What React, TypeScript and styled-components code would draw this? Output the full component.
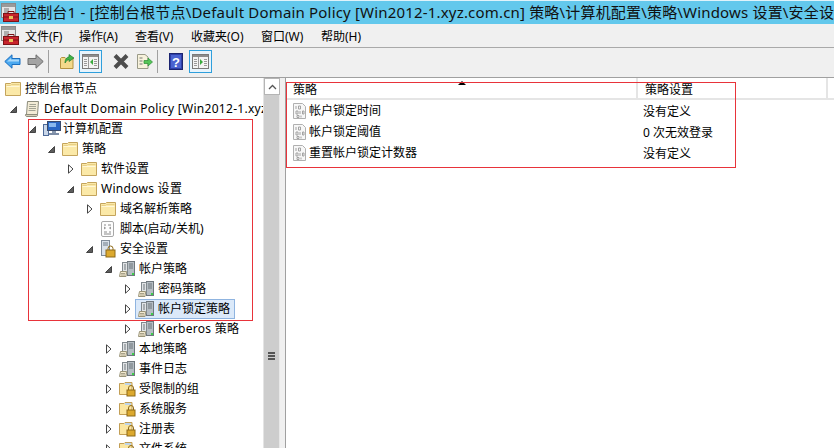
import React from "react";
import styled, { createGlobalStyle } from "styled-components";

const Global = createGlobalStyle`
  html, body { margin: 0; padding: 0; background: #fff; }
  body { font-family: "Noto Sans", "Noto Sans CJK SC", sans-serif; font-size: 12px; color: #000; }
  #root { width: 834px; height: 448px; overflow: hidden; }
  svg { flex: none; display: block; }
`;

const Shell = styled.div`
  position: relative;
  width: 834px;
  height: 448px;
  display: flex;
  flex-direction: column;
  overflow: hidden;
`;
const TitleBar = styled.div`
  height: 24px;
  flex: none;
  box-sizing: border-box;
  border-top: 1px solid #dff3fb;
  background: #63c8ec;
  display: flex;
  align-items: center;
  padding-left: 1px;
  gap: 3px;
  white-space: nowrap;
  overflow: hidden;
`;
const TitleText = styled.span`
  font-size: 15px;
  line-height: 23px;
  letter-spacing: 0.18px;
  color: #111;
`;
const MenuBar = styled.div`
  height: 24px;
  flex: none;
  box-sizing: border-box;
  background: #f0f0f0;
  border-bottom: 1px solid #a9a9a9;
  display: flex;
  align-items: center;
  padding-left: 1px;
`;
const MenuIcon = styled.div`
  width: 24px;
  height: 20px;
  flex: none;
`;
const MenuItem = styled.span<{ $w: number }>`
  width: ${(p) => p.$w}px;
  flex: none;
  font-size: 12px;
`;
const ToolBar = styled.div`
  height: 30px;
  flex: none;
  box-sizing: border-box;
  background: #f0f0f0;
  border-bottom: 1px solid #a0a0a0;
  display: flex;
  align-items: center;
  padding: 0 0 3px 4px;
`;
const ToolIcon = styled.div<{ $l?: number }>`
  flex: none;
  margin-left: ${(p) => p.$l ?? 0}px;
  display: flex;
`;
const ToolSep = styled.div<{ $l: number }>`
  width: 1px;
  height: 23px;
  background: #a0a0a0;
  margin-left: ${(p) => p.$l}px;
  flex: none;
`;
const ToggleButton = styled.div<{ $l: number }>`
  width: 23px;
  height: 23px;
  box-sizing: border-box;
  flex: none;
  margin-left: ${(p) => p.$l}px;
  border: 1px solid #2f9fdc;
  background: #e8f4fc;
  display: flex;
  align-items: center;
  justify-content: center;
`;
const Panes = styled.div`
  flex: 1;
  min-height: 0;
  display: flex;
  background: #f0f0f0;
  overflow: hidden;
`;
const TreePane = styled.div`
  width: 280px;
  flex: none;
  display: flex;
  background: #fff;
  overflow: hidden;
`;
const TreeList = styled.div`
  flex: 1;
  min-width: 0;
  overflow: hidden;
  padding-top: 1px;
`;
const Row = styled.div`
  height: 20px;
  display: flex;
  align-items: center;
  white-space: nowrap;
`;
const Indent = styled.div<{ $level: number }>`
  width: ${(p) => 3 + p.$level * 19}px;
  flex: none;
  display: flex;
  justify-content: flex-end;
  align-items: center;
`;
const ArrowBox = styled.div`
  margin-right: 5px;
  width: 7px;
  display: flex;
  justify-content: center;
  flex: none;
`;
const Item = styled.div<{ $sel?: boolean }>`
  display: flex;
  align-items: center;
  gap: 4px;
  height: 20px;
  box-sizing: border-box;
  padding: 0 4px 0 2px;
  border: 1px solid transparent;
  margin-left: -1px;
  background: ${(p) => (p.$sel ? "#dbe9f9" : "transparent")};
  border-color: ${(p) => (p.$sel ? "#8fb4e0" : "transparent")};
`;
const IconSlot = styled.div`
  width: 16px;
  height: 18px;
  flex: none;
  display: flex;
  align-items: center;
`;
const Label = styled.span<{ $wide?: boolean }>`
  font-size: 12px;
  line-height: 18px;
  letter-spacing: ${(p) => (p.$wide ? "0.28px" : "0")};
`;
const ScrollBar = styled.div`
  width: 17px;
  height: 540px;
  flex: none;
  display: flex;
  flex-direction: column;
  background: #f0f0f0;
  border-left: 1px solid #e4e4e4;
  box-sizing: border-box;
`;
const ScrollBtn = styled.div`
  height: 17px;
  flex: none;
  background: #fff;
  border: 1px solid #b5b5b5;
  box-sizing: border-box;
  display: flex;
  align-items: center;
  justify-content: center;
`;
const ScrollThumb = styled.div`
  flex: 1;
  background: #cdcdcd;
  display: flex;
  align-items: center;
  justify-content: center;
  border-right: 1px solid #e8e8e8;
  padding-bottom: 2px;
`;
const Grip = styled.div`
  width: 7px;
  height: 8px;
  border-top: 2px solid #555;
  border-bottom: 2px solid #555;
  box-sizing: border-box;
  &::after {
    content: "";
    display: block;
    height: 2px;
    margin-top: 1px;
    background: #555;
  }
`;
const Splitter = styled.div`
  width: 5px;
  flex: none;
`;
const ListPane = styled.div`
  flex: 1;
  min-width: 0;
  background: #fff;
  border-left: 1px solid #a0a0a0;
  display: flex;
  flex-direction: column;
`;
const HeaderRow = styled.div`
  height: 22px;
  flex: none;
  display: flex;
  border-bottom: 2px solid #e5e5e5;
  box-sizing: border-box;
`;
const HeaderCell = styled.div<{ $w: number }>`
  width: ${(p) => p.$w}px;
  flex: none;
  box-sizing: border-box;
  border-right: 2px solid #e5e5e5;
  padding: 3px 0 0 7px;
  font-size: 12px;
  line-height: 18px;
  position: relative;
`;
const SortMark = styled.div`
  position: absolute;
  left: 172px;
  top: 3px;
  width: 0;
  height: 0;
  border-left: 4px solid transparent;
  border-right: 4px solid transparent;
  border-bottom: 4px solid #000;
`;
const ListRow = styled.div`
  height: 21px;
  display: flex;
  align-items: center;
  white-space: nowrap;
`;
const NameCell = styled.div`
  width: 350px;
  flex: none;
  display: flex;
  align-items: center;
  gap: 3px;
  padding-left: 7px;
  box-sizing: border-box;
`;
const ValueCell = styled.div`
  font-size: 12px;
  padding-left: 7px;
`;
const Highlight = styled.div<{ $x: number; $y: number; $w: number; $h: number }>`
  position: absolute;
  left: ${(p) => p.$x}px;
  top: ${(p) => p.$y}px;
  width: ${(p) => p.$w}px;
  height: ${(p) => p.$h}px;
  box-sizing: border-box;
  border: 1px solid #e8333a;
  pointer-events: none;
`;

const AppIcon = () => (
  <svg width="18" height="20" viewBox="0 0 18 20">
    <rect x=".5" y=".5" width="14" height="14" fill="#e6e6e6" stroke="#8a8a8a" />
    <rect x="1" y="1" width="13" height="3" fill="#9a9a9a" />
    <path d="M3 6h5M3 8h5M3 10h5" stroke="#777" />
    <rect x="2.500" y="10.500" width="15" height="8" fill="#c8242c" stroke="#7c1216" />
    <path d="M7 10.500V8.500h6v2" fill="none" stroke="#7c1216" />
    <path d="M3 14h14" stroke="#7c1216" />
    <rect x="8" y="13" width="4" height="3" fill="#e8c35a" />
  </svg>
);
const Folder = () => (
  <svg width="16" height="16" viewBox="0 0 16 16">
    <path d="M.5 2.500V14.500H15.500V1.500H6.500L5.500 2.500Z" fill="#fbe9a8" stroke="#c4a45c" />
    <path d="M1.500 4.500H5.500L6.500 3.500H14.500" fill="none" stroke="#e7cf86" />
    <path d="M1.500 5.500H14.500" stroke="#fff7d8" />
  </svg>
);
const LockFolder = () => (
  <svg width="18" height="16" viewBox="0 0 18 16">
    <path d="M.5 2.500V13.500H13V1.500H6L5 2.500Z" fill="#fbe6a0" stroke="#c29e55" />
    <rect x="6" y="2" width="6" height="2" fill="#bcd4ea" />
    <rect x="8" y="9" width="8" height="6" fill="#dca92e" stroke="#8e6a18" />
    <path d="M9.500 9V7a2.500 2.500 0 0 1 5 0v2" fill="none" stroke="#8e6a18" />
  </svg>
);
const PolicyDoc = () => (
  <svg width="16" height="18" viewBox="0 0 16 18">
    <path d="M3.500 1.500H14.500L13.500 14.500H2.500Z" fill="#f3ecd6" stroke="#8c8c7c" />
    <path d="M5.500 4.500H12M5 6.500H12M5 8.500H12M4.500 10.500H11.500" stroke="#a3a394" />
    <path d="M1.500 14.500a1.500 1.500 0 0 0 1.500 2H12a1.500 1.500 0 0 0 1.500-2Z" fill="#d7d0b8" stroke="#8c8c7c" />
  </svg>
);
const Computer = () => (
  <svg width="18" height="18" viewBox="0 0 18 18">
    <rect x=".5" y="4.500" width="5" height="11" fill="#c9d6e8" stroke="#4e6a99" />
    <rect x="4.500" y="1.500" width="13" height="9" fill="#2a67c4" stroke="#3a4a6a" />
    <rect x="6" y="3" width="7" height="4" fill="#8ab9ee" />
    <path d="M9 11v2H13V11" fill="#8a9ab0" />
    <rect x="6" y="13" width="10" height="2" fill="#7d8da6" />
  </svg>
);
const Script = () => (
  <svg width="16" height="16" viewBox="0 0 16 16">
    <rect x="1.500" y=".5" width="12" height="15" rx="1.500" fill="#fdfdfd" stroke="#a8a8a8" />
    <path d="M4 4h2M8 4h3M4 8l1.500-1L4 6M11 6l-1.500 1 1.500 1M4 11h3M9 11h2M4 13h7" fill="none" stroke="#8a8a8a" />
  </svg>
);
const SafeIcon = () => (
  <svg width="16" height="18" viewBox="0 0 16 18">
    <rect x="1.500" y=".5" width="8" height="15" fill="#d9e1ea" stroke="#7f8b99" />
    <path d="M3 3h5M3 5h5" stroke="#6d7a88" />
    <rect x="6" y="10" width="9" height="7" fill="#dca92e" stroke="#8e6a18" />
    <path d="M8 10V8.500a2.500 2.500 0 0 1 5 0V10" fill="none" stroke="#8e6a18" />
  </svg>
);
const ServerDoc = () => (
  <svg width="16" height="18" viewBox="0 0 16 18">
    <rect x="8.500" y="1.500" width="7" height="14" fill="#b5bdc3" stroke="#6f777d" />
    <rect x="3.500" y="2.500" width="5" height="11" fill="#e1e4e6" stroke="#81898e" />
    <path d="M10 4h4M10 6h4M10 8h4M5 5h2M5 7h2M5 9h2" stroke="#6f777d" />
    <rect x="13" y="13" width="2" height="2" fill="#3ccf4a" />
    <path d="M1.500 11.500h6L7 16.500H.5Z" fill="#f3ead0" stroke="#9a9478" />
    <path d="M2 13.500h4M2 15h4" stroke="#a8a28a" />
  </svg>
);
const PolicyItem = () => (
  <svg width="13" height="16" viewBox="0 0 13 16">
    <path d="M.5 .5H9.500L12.500 3.500V15.500H.5Z" fill="#f7f7f7" stroke="#b0b0b0" />
    <path d="M3 3v3M5.500 3h2v3h-2ZM3 8h2v3H3ZM7 8v3M9.500 8h1.500v3H9.500ZM4 12.500h2v2H4ZM8 12.500v2" fill="none" stroke="#a2a2a2" />
  </svg>
);

const OpenArrow = () => (
  <svg width="7" height="7" viewBox="0 0 7 7"><path d="M6.500 .5V6.500H.5Z" fill="#5c5c5c" stroke="#444" /></svg>
);
const ClosedArrow = () => (
  <svg width="7" height="10" viewBox="0 0 7 10"><path d="M1.500 .8L6 5 1.500 9.200Z" fill="#fff" stroke="#444" /></svg>
);

const BackIcon = () => (
  <svg width="17" height="15" viewBox="0 0 17 15">
    <path d="M8 .8L.8 7.500 8 14.200V10.500H16V4.500H8Z" fill="#4aa8f0" stroke="#1a6fc0" />
    <path d="M7 4L3 7.500H15V5.500H7Z" fill="#a8d8fa" />
  </svg>
);
const ForwardIcon = () => (
  <svg width="17" height="15" viewBox="0 0 17 15">
    <path d="M9 .8L16.200 7.500 9 14.200V10.500H1V4.500H9Z" fill="#a4a4a4" stroke="#6d6d6d" />
  </svg>
);
const UpIcon = () => (
  <svg width="15" height="16" viewBox="0 0 15 16">
    <path d="M.5 5.500V15.500H13V5.500H6L5 4.500H1.500Z" fill="#f3d98a" stroke="#b4923f" />
    <path d="M5 10c0-4 2-6 4-6V1.500L14 5 9 8.500V6.500C7.500 6.500 6.500 8 5 10Z" fill="#3fb548" stroke="#237a2c" strokeWidth=".7" />
  </svg>
);
const PaneIcon = ({ side }: { side: "l" | "r" }) => (
  <svg width="17" height="15" viewBox="0 0 17 15">
    <rect x=".5" y=".5" width="16" height="14" fill="#f4f4f4" stroke="#7a7a7a" />
    <rect x="1" y="1" width="15" height="2" fill="#8c8c8c" />
    <path d="M6.500 3v11" stroke="#9a9a9a" />
    <path d="M2 5.500h3M2 7.500h3M2 9.500h3M2 11.500h3M12 5.500h3M12 7.500h3M12 9.500h3M12 11.500h3" stroke="#9a9a9a" />
    {side === "r" ? (
      <path d="M8 5L11 8 8 11Z" fill="#38a93f" />
    ) : (
      <path d="M11 5L8 8 11 11Z" fill="#38a93f" />
    )}
  </svg>
);
const DeleteIcon = () => (
  <svg width="16" height="15" viewBox="0 0 16 15">
    <path d="M2 1.500L14 13.500M14 1.500L2 13.500" stroke="#4d4d4d" strokeWidth="4" />
  </svg>
);
const ExportIcon = () => (
  <svg width="17" height="17" viewBox="0 0 17 17">
    <path d="M1.500 1.500H9L12 4V15.500H1.500Z" fill="#f7f2dc" stroke="#9a9a88" />
    <path d="M3.500 5h3M3.500 8h3M3.500 11h3" stroke="#777" />
    <path d="M8 7.500h4V5l4.500 4-4.500 4V10.500H8Z" fill="#55c558" stroke="#2c8c33" strokeWidth=".7" />
  </svg>
);
const HelpIcon = () => (
  <svg width="15" height="17" viewBox="0 0 15 17">
    <rect x=".5" y=".5" width="13" height="16" fill="#2e3fa8" stroke="#1b2470" />
    <rect x="2" y="2" width="10" height="13" fill="#4a63d0" />
    <text x="7" y="14" textAnchor="middle" fontSize="13" fontWeight="700" fontFamily="Liberation Sans" fill="#fff">?</text>
  </svg>
);

type Icon = "folder" | "lock" | "doc" | "pc" | "script" | "safe" | "server";
const icons: Record<Icon, React.ReactElement> = {
  folder: <Folder />,
  lock: <LockFolder />,
  doc: <PolicyDoc />,
  pc: <Computer />,
  script: <Script />,
  safe: <SafeIcon />,
  server: <ServerDoc />,
};
type Node = { l: number; a?: "o" | "c"; i: Icon; t: string; s?: boolean; w?: boolean };
const tree: Node[] = [
  { l: 0, i: "folder", t: "控制台根节点" },
  { l: 1, a: "o", i: "doc", t: "Default Domain Policy [Win2012-1.xyz.", w: true },
  { l: 2, a: "o", i: "pc", t: "计算机配置" },
  { l: 3, a: "o", i: "folder", t: "策略" },
  { l: 4, a: "c", i: "folder", t: "软件设置" },
  { l: 4, a: "o", i: "folder", t: "Windows 设置", w: true },
  { l: 5, a: "c", i: "folder", t: "域名解析策略" },
  { l: 5, i: "script", t: "脚本(启动/关机)" },
  { l: 5, a: "o", i: "safe", t: "安全设置" },
  { l: 6, a: "o", i: "server", t: "帐户策略" },
  { l: 7, a: "c", i: "server", t: "密码策略" },
  { l: 7, a: "c", i: "server", t: "帐户锁定策略", s: true },
  { l: 7, a: "c", i: "server", t: "Kerberos 策略", w: true },
  { l: 6, a: "c", i: "server", t: "本地策略" },
  { l: 6, a: "c", i: "server", t: "事件日志" },
  { l: 6, a: "c", i: "lock", t: "受限制的组" },
  { l: 6, a: "c", i: "lock", t: "系统服务" },
  { l: 6, a: "c", i: "lock", t: "注册表" },
  { l: 6, a: "c", i: "lock", t: "文件系统" },
];
const menus: [string, number][] = [
  ["文件(F)", 54],
  ["操作(A)", 56],
  ["查看(V)", 56],
  ["收藏夹(O)", 70],
  ["窗口(W)", 60],
  ["帮助(H)", 60],
];
const rows = [
  ["帐户锁定时间", "没有定义"],
  ["帐户锁定阈值", "0 次无效登录"],
  ["重置帐户锁定计数器", "没有定义"],
];

export default function App() {
  return (
    <Shell>
      <Global />
      <TitleBar>
        <AppIcon />
        <TitleText>
          控制台1 - [控制台根节点\Default Domain Policy [Win2012-1.xyz.com.cn] 策略\计算机配置\策略\Windows 设置\安全设
        </TitleText>
      </TitleBar>
      <MenuBar>
        <MenuIcon><AppIcon /></MenuIcon>
        {menus.map(([m, w]) => (
          <MenuItem key={m} $w={w}>{m}</MenuItem>
        ))}
      </MenuBar>
      <ToolBar>
        <ToolIcon><BackIcon /></ToolIcon>
        <ToolIcon $l={6}><ForwardIcon /></ToolIcon>
        <ToolSep $l={4} />
        <ToolIcon $l={11}><UpIcon /></ToolIcon>
        <ToggleButton $l={4}><PaneIcon side="l" /></ToggleButton>
        <ToolIcon $l={11}><DeleteIcon /></ToolIcon>
        <ToolIcon $l={7}><ExportIcon /></ToolIcon>
        <ToolSep $l={4} />
        <ToolIcon $l={11}><HelpIcon /></ToolIcon>
        <ToggleButton $l={5}><PaneIcon side="r" /></ToggleButton>
      </ToolBar>
      <Panes>
        <TreePane>
          <TreeList>
            {tree.map((n) => (
              <Row key={n.t}>
                <Indent $level={n.l}>
                  {n.a && <ArrowBox>{n.a === "o" ? <OpenArrow /> : <ClosedArrow />}</ArrowBox>}
                </Indent>
                <Item $sel={n.s}>
                  <IconSlot>{icons[n.i]}</IconSlot>
                  <Label $wide={n.w}>{n.t}</Label>
                </Item>
              </Row>
            ))}
          </TreeList>
          <ScrollBar>
            <ScrollBtn>
              <svg width="9" height="6" viewBox="0 0 9 6"><path d="M1 5L4.500 1.500 8 5" fill="none" stroke="#555" strokeWidth="1.300" /></svg>
            </ScrollBtn>
            <ScrollThumb><Grip /></ScrollThumb>
          </ScrollBar>
        </TreePane>
        <Splitter />
        <ListPane>
          <HeaderRow>
            <HeaderCell $w={352}>策略<SortMark /></HeaderCell>
            <HeaderCell $w={190}>策略设置</HeaderCell>
          </HeaderRow>
          <div>
            {rows.map(([a, b]) => (
              <ListRow key={a}>
                <NameCell><PolicyItem /><Label>{a}</Label></NameCell>
                <ValueCell>{b}</ValueCell>
              </ListRow>
            ))}
          </div>
        </ListPane>
      </Panes>
      <Highlight $x={28} $y={119} $w={225} $h={202} />
      <Highlight $x={286} $y={82} $w={450} $h={86} />
    </Shell>
  );
}
